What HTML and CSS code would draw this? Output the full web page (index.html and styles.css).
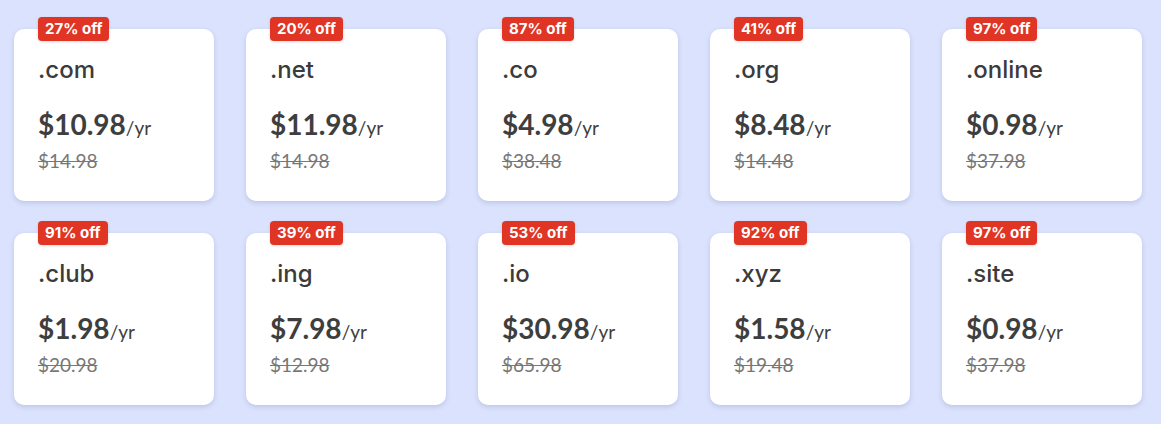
FILE: index.html
```html
<!DOCTYPE html>
<html>
<head>
<meta charset="utf-8">
<link rel="stylesheet" href="styles.css">
</head>
<body>
<div class="grid">
  <div class="card"><span class="badge">27% off</span><div class="tld">.com</div><div class="price">$10.98<span class="per">/yr</span></div><div class="old">$14.98</div></div>
  <div class="card"><span class="badge">20% off</span><div class="tld">.net</div><div class="price">$11.98<span class="per">/yr</span></div><div class="old">$14.98</div></div>
  <div class="card"><span class="badge">87% off</span><div class="tld">.co</div><div class="price">$4.98<span class="per">/yr</span></div><div class="old">$38.48</div></div>
  <div class="card"><span class="badge">41% off</span><div class="tld">.org</div><div class="price">$8.48<span class="per">/yr</span></div><div class="old">$14.48</div></div>
  <div class="card"><span class="badge">97% off</span><div class="tld">.online</div><div class="price">$0.98<span class="per">/yr</span></div><div class="old">$37.98</div></div>
  <div class="card"><span class="badge">91% off</span><div class="tld">.club</div><div class="price">$1.98<span class="per">/yr</span></div><div class="old">$20.98</div></div>
  <div class="card"><span class="badge">39% off</span><div class="tld">.ing</div><div class="price">$7.98<span class="per">/yr</span></div><div class="old">$12.98</div></div>
  <div class="card"><span class="badge">53% off</span><div class="tld">.io</div><div class="price">$30.98<span class="per">/yr</span></div><div class="old">$65.98</div></div>
  <div class="card"><span class="badge">92% off</span><div class="tld">.xyz</div><div class="price">$1.58<span class="per">/yr</span></div><div class="old">$19.48</div></div>
  <div class="card"><span class="badge">97% off</span><div class="tld">.site</div><div class="price">$0.98<span class="per">/yr</span></div><div class="old">$37.98</div></div>
</div>
</body>
</html>
```
FILE: styles.css
```css
html, body {
  margin: 0;
  padding: 0;
  background: #dae2fd;
  font-family: Lato, "Noto Sans", sans-serif;
  color: #3e3e3e;
}
.grid {
  display: grid;
  grid-template-columns: repeat(5, 200px);
  column-gap: 32px;
  row-gap: 32px;
  padding: 29px 14px;
}
.card {
  position: relative;
  background: #fff;
  border-radius: 10px;
  height: 172px;
  box-sizing: border-box;
  padding: 26px 24px 0;
  box-shadow: 0 2px 5px rgba(60, 70, 120, 0.18);
}
.badge {
  position: absolute;
  left: 24px;
  top: -12px;
  height: 24px;
  line-height: 24px;
  padding: 0 7px;
  background: #e03424;
  color: #fff;
  border-radius: 4px;
  font-family: Inter, "Open Sans", sans-serif;
  font-weight: 700;
  font-size: 15px;
  box-shadow: 0 1px 3px rgba(0,0,0,0.15);
}
.tld {
  font-family: Inter, "Noto Sans", sans-serif;
  font-size: 24px;
  font-weight: 500;
  line-height: 30px;
  color: #3b3b3b;
}
.price {
  margin-top: 22px;
  font-size: 28px;
  font-weight: 700;
  line-height: 34px;
}
.per {
  font-size: 19px;
  font-weight: 400;
}
.old {
  margin-top: 4px;
  font-size: 19px;
  color: #777;
  text-decoration: line-through;
  line-height: 24px;
}
```
